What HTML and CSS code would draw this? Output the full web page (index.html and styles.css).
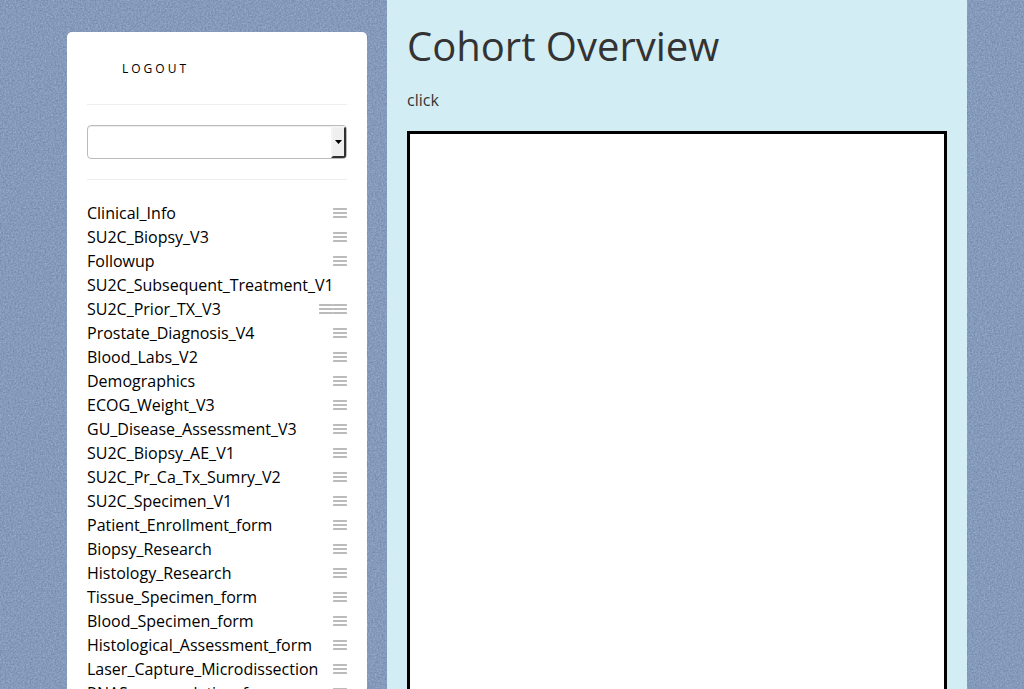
FILE: index.html
```
<!DOCTYPE html>
<html lang="en">
<head>
<meta charset="utf-8">
<title>Cohort Overview</title>
<link rel="stylesheet" href="styles.css">
</head>
<body>
<svg class="texture" aria-hidden="true">
  <filter id="grain" x="0" y="0" width="100%" height="100%" color-interpolation-filters="sRGB">
    <feTurbulence type="fractalNoise" baseFrequency="0.6" numOctaves="3" seed="4" stitchTiles="stitch"/>
    <feColorMatrix values="0.2 0 0 0 0.42  0.2 0 0 0 0.505  0.2 0 0 0 0.635  0 0 0 0 1"/>
  </filter>
  <rect width="100%" height="100%" filter="url(#grain)"/>
</svg>
<div class="container">
  <aside class="sidebar">
    <a class="logout">LOGOUT</a>
    <hr class="rule">
    <div class="combo"><span class="combo-button"><svg width="7" height="4" viewBox="0 0 7 4"><path d="M0 0h7L3.5 4z"/></svg></span></div>
    <hr class="rule">
    <ul class="forms" id="forms"></ul>
  </aside>
  <main class="content">
    <h1>Cohort Overview</h1>
    <p>click</p>
    <div class="chart"></div>
  </main>
</div>
<script src="app.js"></script>
</body>
</html>
```

FILE: styles.css
```
* { box-sizing: border-box; }
html, body { height: 100%; }
body {
  margin: 0;
  overflow: hidden;
  background: #869cbf;
  color: #333;
  font: 16px/24px "Open Sans", "Noto Sans", sans-serif;
}
.texture { position: absolute; inset: 0; width: 100%; height: 100%; }
.container {
  position: relative;
  display: flex;
  align-items: flex-start;
  gap: 20px;
  width: 900px;
  height: 689px;
  margin-left: 67px;
  overflow: hidden;
}
.sidebar {
  width: 300px;
  height: 900px;
  margin-top: 32px;
  padding: 20px;
  background: #fff;
  border-radius: 5px;
}
.logout {
  display: block;
  height: 32px;
  padding: 0 15px;
  margin-left: 20px;
  color: #000;
  font-size: 12px;
  line-height: 33px;
  letter-spacing: 3px;
}
.rule { height: 1px; margin: 20px 0; border: 0; background: #eee; }
.combo {
  display: flex;
  justify-content: flex-end;
  height: 34px;
  border: 1px solid #bbb;
  border-radius: 4px;
  box-shadow: inset 0 1px 1px rgba(0, 0, 0, .075);
  overflow: hidden;
}
.combo-button {
  display: flex;
  align-items: center;
  justify-content: center;
  width: 15px;
  margin-top: 0;
  background: #efefef;
  border: 2px outset #f4f4f4;
  border-right-color: #858585;
  border-bottom-color: #858585;
}
.combo-button svg { display: block; }
.forms { margin: 0; padding: 1px 0 0; list-style: none; }
.forms li { display: flex; height: 24px; color: #000; white-space: nowrap; }
.forms .name { flex: 1; }
.handle { width: 14px; height: 12px; margin-top: 6px; fill: #bbb; }
.content {
  width: 580px;
  height: 900px;
  padding: 20px;
  background: #d3edf4;
}
h1 { margin: 0; font-size: 40px; line-height: 52px; font-weight: 400; }
p { margin: 16px 0 19px; }
.chart { height: 760px; border: 3px solid #000; background: #fff; }
```

FILE: app.js
```
const forms = [
  ["Clinical_Info", 1], ["SU2C_Biopsy_V3", 1], ["Followup", 1],
  ["SU2C_Subsequent_Treatment_V1", 0], ["SU2C_Prior_TX_V3", 2],
  ["Prostate_Diagnosis_V4", 1], ["Blood_Labs_V2", 1], ["Demographics", 1],
  ["ECOG_Weight_V3", 1], ["GU_Disease_Assessment_V3", 1],
  ["SU2C_Biopsy_AE_V1", 1], ["SU2C_Pr_Ca_Tx_Sumry_V2", 1],
  ["SU2C_Specimen_V1", 1], ["Patient_Enrollment_form", 1],
  ["Biopsy_Research", 1], ["Histology_Research", 1],
  ["Tissue_Specimen_form", 1], ["Blood_Specimen_form", 1],
  ["Histological_Assessment_form", 1], ["Laser_Capture_Microdissection", 1],
  ["RNAS_accumulation_form", 1]
];
const handle = '<svg class="handle" viewBox="0 0 14 12"><rect width="14" height="2" y="1" rx=".6"/><rect width="14" height="2" y="5" rx=".6"/><rect width="14" height="2" y="9" rx=".6"/></svg>';
document.getElementById("forms").innerHTML = forms
  .map(([name, handles]) => `<li><span class="name">${name}</span>${handle.repeat(handles)}</li>`)
  .join("");
```
